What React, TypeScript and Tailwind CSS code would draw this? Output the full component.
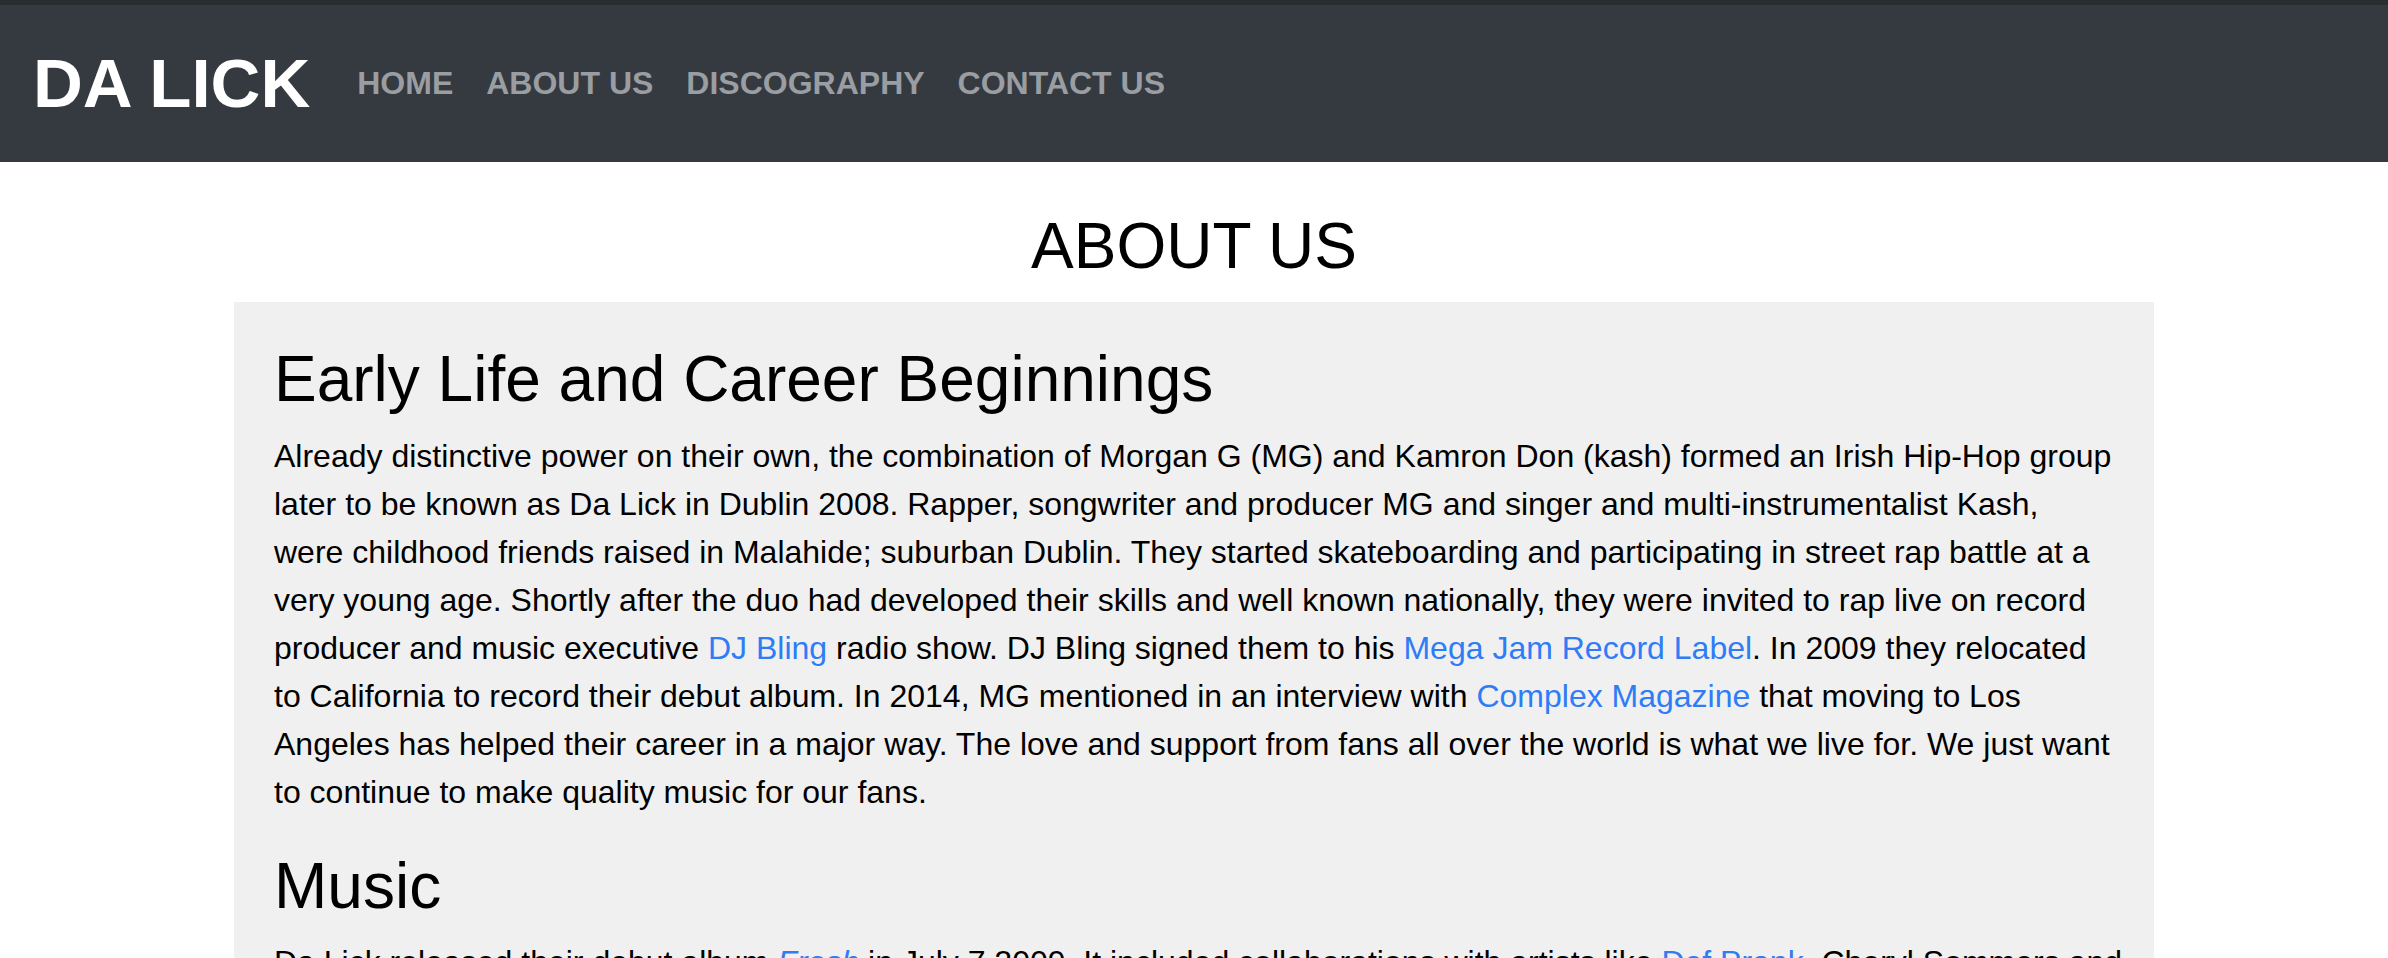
import React from "react";

const links = ["HOME", "ABOUT US", "DISCOGRAPHY", "CONTACT US"];

function A({ children }: { children: React.ReactNode }) {
  return (
    <a href="#" className="text-[#2e7cf6] hover:underline">
      {children}
    </a>
  );
}

export default function App() {
  return (
    <div
      className="min-h-screen bg-white text-black"
      style={{ fontFamily: '"Liberation Sans", Arial, Helvetica, sans-serif' }}
    >
      {/* ---------- TOP STRIP ---------- */}
      <div className="h-[5px] bg-[#2a2d30]" />

      {/* ---------- NAVBAR ---------- */}
      <nav className="h-[157px] bg-[#343a40] flex items-center pl-[33px]">
        <a href="#" className="text-[69px] font-bold text-white leading-none">
          DA LICK
        </a>
        <ul className="flex items-center ml-[47px] gap-[33px]">
          {links.map((l) => (
            <li key={l}>
              <a href="#" className="text-[32px] font-bold text-[#9a9da1] leading-none">
                {l}
              </a>
            </li>
          ))}
        </ul>
      </nav>

      {/* ---------- CONTENT ---------- */}
      <main>
        <h1 className="text-center text-[64px] leading-[1.2] mt-[46px] mb-[17px]">ABOUT US</h1>

        <section className="w-[1920px] mx-auto bg-[#f0f0f0] pl-[40px] pr-[14px] pt-[39px] pb-10">
          <h2 className="text-[64px] leading-[1.2] mb-[14px]">Early Life and Career Beginnings</h2>
          {/* line breaks kept as in the original layout */}
          <p className="text-[32px] leading-[48px] mb-[32px]">
            Already distinctive power on their own, the combination of Morgan G (MG) and Kamron Don
            (kash) formed an Irish Hip-Hop group
            <br />
            later to be known as Da Lick in Dublin 2008. Rapper, songwriter and producer MG and
            singer and multi-instrumentalist Kash,
            <br />
            were childhood friends raised in Malahide; suburban Dublin. They started skateboarding
            and participating in street rap battle at a
            <br />
            very young age. Shortly after the duo had developed their skills and well known
            nationally, they were invited to rap live on record
            <br />
            producer and music executive <A>DJ Bling</A> radio show. DJ Bling signed them to his{" "}
            <A>Mega Jam Record Label</A>. In 2009 they relocated
            <br />
            to California to record their debut album. In 2014, MG mentioned in an interview with{" "}
            <A>Complex Magazine</A> that moving to Los
            <br />
            Angeles has helped their career in a major way. The love and support from fans all over
            the world is what we live for. We just want
            <br />
            to continue to make quality music for our fans.
          </p>

          <h2 className="text-[64px] leading-[1.2] mb-[14px]">Music</h2>
          <p className="text-[32px] leading-[48px]">
            Da Lick released their debut album <i className="text-[#2e7cf6]">Fresh</i> in July 7
            2009. It included collaborations with artists like <A>Def Prank</A>, Cheryl Sommers and
            <br />
            many more, and went on to top the Irish charts within weeks of its release.
          </p>
        </section>
      </main>
    </div>
  );
}
